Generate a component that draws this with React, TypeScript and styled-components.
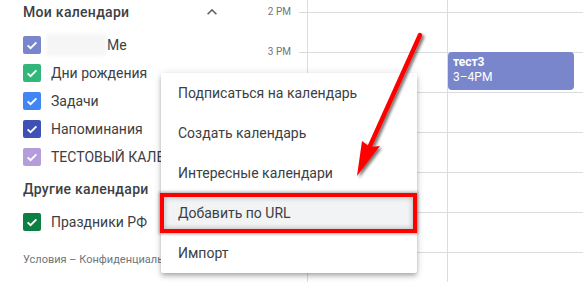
import React from 'react'
import styled, { createGlobalStyle } from 'styled-components'

const GlobalStyle = createGlobalStyle`
    html, body {
        margin: 0;
        padding: 0;
        background: #fff;
    }
    body {
        font-family: Roboto, "Noto Sans", "Liberation Sans", sans-serif;
        overflow: hidden;
    }
    * {
        box-sizing: border-box;
    }
`

const Page = styled.div`
    position: relative;
    display: flex;
    width: 583px;
    height: 282px;
    overflow: hidden;
    background: #fff;
`

const Sidebar = styled.aside`
    width: 256px;
    flex-shrink: 0;
    display: flex;
    flex-direction: column;
    padding: 0 34px 0 23px;
    color: #3c4043;
`

const SectionHeader = styled.div<{ $top?: number }>`
    display: flex;
    align-items: center;
    justify-content: space-between;
    height: 24px;
    margin-top: ${({ $top }) => $top ?? 0}px;
    margin-bottom: 7px;
    font-size: 14px;
    font-weight: 500;
    letter-spacing: 0.3px;
    white-space: nowrap;
`

const CalendarList = styled.div`
    display: flex;
    flex-direction: column;
`

const CalendarRow = styled.div`
    display: flex;
    align-items: center;
    gap: 10px;
    height: 28px;
    font-size: 14px;
    white-space: nowrap;
`

const Check = styled.span<{ $color: string }>`
    display: flex;
    align-items: center;
    justify-content: center;
    width: 18px;
    height: 18px;
    border-radius: 2px;
    background: ${({ $color }) => $color};
    flex-shrink: 0;
`

const NameWithBlur = styled.span`
    display: flex;
    align-items: center;
`

const Blurred = styled.span`
    display: block;
    width: 61px;
    height: 22px;
    margin-left: -5px;
    background: #f6f6f6;
    border-radius: 3px;
    filter: blur(1.5px);
`

const Footer = styled.div`
    width: 138px;
    margin-top: 16px;
    overflow: hidden;
    font-size: 11px;
    line-height: 16px;
    color: #70757a;
    white-space: nowrap;
`

const TimeColumn = styled.div`
    width: 51px;
    flex-shrink: 0;
    padding-top: 12px;
`

const TimeRow = styled.div`
    display: flex;
    justify-content: flex-end;
    align-items: flex-start;
    height: 40px;
`

const TimeLabel = styled.span`
    margin: -6px 8px 0 0;
    font-size: 10px;
    line-height: 12px;
    color: #70757a;
`

const Tick = styled.span`
    width: 8px;
    border-top: 1px solid #dadce0;
`

const DayColumn = styled.div`
    position: relative;
    width: 140px;
    flex-shrink: 0;
    padding-top: 12px;
    border-left: 1px solid #dadce0;
`

const HourCell = styled.div`
    height: 40px;
    padding-right: 13px;
    border-top: 1px solid #dadce0;
`

const Event = styled.div`
    height: 38px;
    margin-top: -1px;
    padding: 3px 5px;
    border-radius: 4px;
    background: #7986cb;
    color: #fff;
    font-size: 12px;
    line-height: 15px;
    b {
        display: block;
        font-weight: 700;
    }
`

const NowDot = styled.span`
    position: absolute;
    left: -5px;
    top: 255px;
    width: 12px;
    height: 12px;
    border-radius: 50%;
    background: #ea4335;
`

const Menu = styled.div`
    position: absolute;
    left: 161px;
    top: 73px;
    z-index: 10;
    width: 256px;
    background: #fff;
    border-radius: 2px;
    box-shadow: 0 4px 5px 0 rgba(0, 0, 0, 0.14), 0 1px 10px 0 rgba(0, 0, 0, 0.12), 0 2px 4px -1px rgba(0, 0, 0, 0.2);
`

const MenuItem = styled.div<{ $marked?: boolean }>`
    display: flex;
    align-items: center;
    height: 40px;
    padding: 0 17px;
    font-size: 14px;
    color: #3c4043;
    white-space: nowrap;
    ${({ $marked }) => $marked && `
        margin-left: -1px;
        padding-left: 18px;
        background: #f1f3f4;
        box-shadow: inset 0 0 0 4px #f00, inset 0 0 5px 5px rgba(0, 0, 0, 0.22), 0 0 3px 1px rgba(0, 0, 0, 0.35);
    `}
`

const Overlay = styled.svg`
    position: absolute;
    left: 0;
    top: 0;
    z-index: 20;
    pointer-events: none;
`

const CheckMark = () => (
    <svg width="14" height="14" viewBox="0 0 24 24">
        <path d="M4.5 12.5l5 5 10-10" fill="none" stroke="#fff" strokeWidth="3.2" />
    </svg>
)

const ExpandLess = () => (
    <svg width="20" height="20" viewBox="0 0 24 24">
        <path d="M12 8l-6 6 1.41 1.41L12 10.83l4.59 4.58L18 14z" fill="#5f6368" />
    </svg>
)

const myCalendars = [
    { color: '#7986cb', name: 'Me', blurred: true },
    { color: '#33b679', name: 'Дни рождения' },
    { color: '#4285f4', name: 'Задачи' },
    { color: '#3f51b5', name: 'Напоминания' },
    { color: '#b39ddb', name: 'ТЕСТОВЫЙ КАЛЕНДАРЬ' },
]

// only the labels not hidden behind the menu
const hours = ['2 PM', '3 PM', '', '', '', '', '']

const menuItems = [
    'Подписаться на календарь',
    'Создать календарь',
    'Интересные календари',
    'Добавить по URL',
    'Импорт',
]

export default function App() {
    return (
        <>
            <GlobalStyle />
            <Page>
                <Sidebar>
                    <SectionHeader>
                        Мои календари
                        <ExpandLess />
                    </SectionHeader>
                    <CalendarList>
                        {myCalendars.map((c) => (
                            <CalendarRow key={c.name}>
                                <Check $color={c.color}><CheckMark /></Check>
                                {c.blurred ? (
                                    <NameWithBlur><Blurred />{c.name}</NameWithBlur>
                                ) : c.name}
                            </CalendarRow>
                        ))}
                    </CalendarList>
                    <SectionHeader $top={6}>
                        Другие календари
                        <ExpandLess />
                    </SectionHeader>
                    <CalendarList>
                        <CalendarRow>
                            <Check $color="#0b8043"><CheckMark /></Check>
                            Праздники РФ
                        </CalendarRow>
                    </CalendarList>
                    <Footer>Условия – Конфиденциальность</Footer>
                </Sidebar>

                <TimeColumn>
                    {hours.map((h, i) => (
                        <TimeRow key={i}>
                            {h && <TimeLabel>{h}</TimeLabel>}
                            <Tick />
                        </TimeRow>
                    ))}
                </TimeColumn>

                <DayColumn>
                    {hours.map((_, i) => <HourCell key={i} />)}
                </DayColumn>
                <DayColumn>
                    {hours.map((_, i) => (
                        <HourCell key={i}>
                            {i === 1 && (
                                <Event>
                                    <b>тест3</b>
                                    3–4PM
                                </Event>
                            )}
                        </HourCell>
                    ))}
                </DayColumn>
                <DayColumn>
                    {hours.map((_, i) => <HourCell key={i} />)}
                    <NowDot />
                </DayColumn>

                <Menu>
                    {menuItems.map((item) => (
                        <MenuItem key={item} $marked={item === 'Добавить по URL'}>{item}</MenuItem>
                    ))}
                </Menu>

                <Overlay width="583" height="282" viewBox="0 0 583 282">
                    <defs>
                        <filter id="arrowShadow" x="-20%" y="-20%" width="140%" height="140%">
                            <feDropShadow dx="2" dy="2" stdDeviation="1.5" floodColor="#000" floodOpacity="0.55" />
                        </filter>
                    </defs>
                    <g filter="url(#arrowShadow)" fill="#f00">
                        <line x1="420" y1="35" x2="370" y2="146" stroke="#f00" strokeWidth="4.5" strokeLinecap="round" />
                        <polygon points="357,176 362,141 370,147 380,146" />
                    </g>
                </Overlay>
            </Page>
        </>
    )
}
